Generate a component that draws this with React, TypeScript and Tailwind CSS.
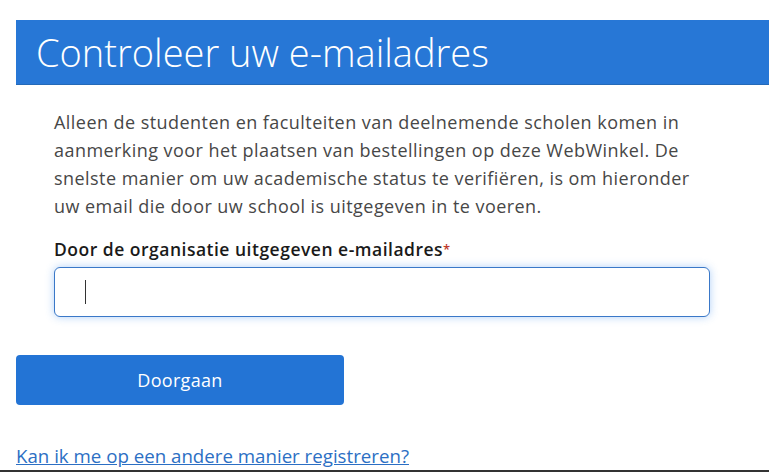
import React from "react";

export default function App() {
  return (
    <div className="relative h-[472px] w-[769px] overflow-hidden bg-white font-['Open_Sans','Lato',sans-serif]">
      <div className="pt-5 pl-4">
        <div className="flex h-[65px] items-center border-b border-[#2469b8] bg-[#2777d6] pl-5">
          <h1 className="text-[38px] font-light leading-none text-white">Controleer uw e-mailadres</h1>
        </div>
      </div>

      <div className="pl-[54px] pr-[55px] pt-[23px]">
        <p className="w-[636px] text-[18px] leading-[28px] tracking-[0.45px] text-[#474747]">
          Alleen de studenten en faculteiten van deelnemende scholen komen in aanmerking voor het plaatsen van bestellingen op deze WebWinkel. De snelste manier om uw academische status te verifiëren, is om hieronder uw email die door uw school is uitgegeven in te voeren.
        </p>

        <label className="mt-[17px] block text-[17.5px] font-semibold leading-[24px] tracking-[0.5px] text-[#1a1a1a]">
          Door de organisatie uitgegeven e-mailadres<span className="align-top text-[13px] text-[#c0392b]">*</span>
        </label>

        <div className="relative mt-[6px] w-[656px]">
          <input
            type="email"
            className="block h-[50px] w-full rounded-[6px] border border-[#3a78c8] bg-white px-8 text-[18px] text-[#333] shadow-[0_0_8px_rgba(80,150,240,0.45)] outline-none"
          />
          <span className="absolute left-[31px] top-[13px] h-[24px] w-px bg-[#333]" />
        </div>
      </div>

      <div className="pl-4 pt-[38px]">
        <button className="h-[50px] w-[328px] rounded-[4px] bg-[#2374d5] text-[18px] tracking-[0.3px] text-white">Doorgaan</button>
      </div>

      <div className="pl-4 pt-[39px]">
        <a href="#" className="text-[18.7px] leading-[24px] text-[#2c6fc4] underline">Kan ik me op een andere manier registreren?</a>
      </div>

      <div className="absolute bottom-0 left-0 h-[2px] w-full bg-[#333]" />
    </div>
  );
}
